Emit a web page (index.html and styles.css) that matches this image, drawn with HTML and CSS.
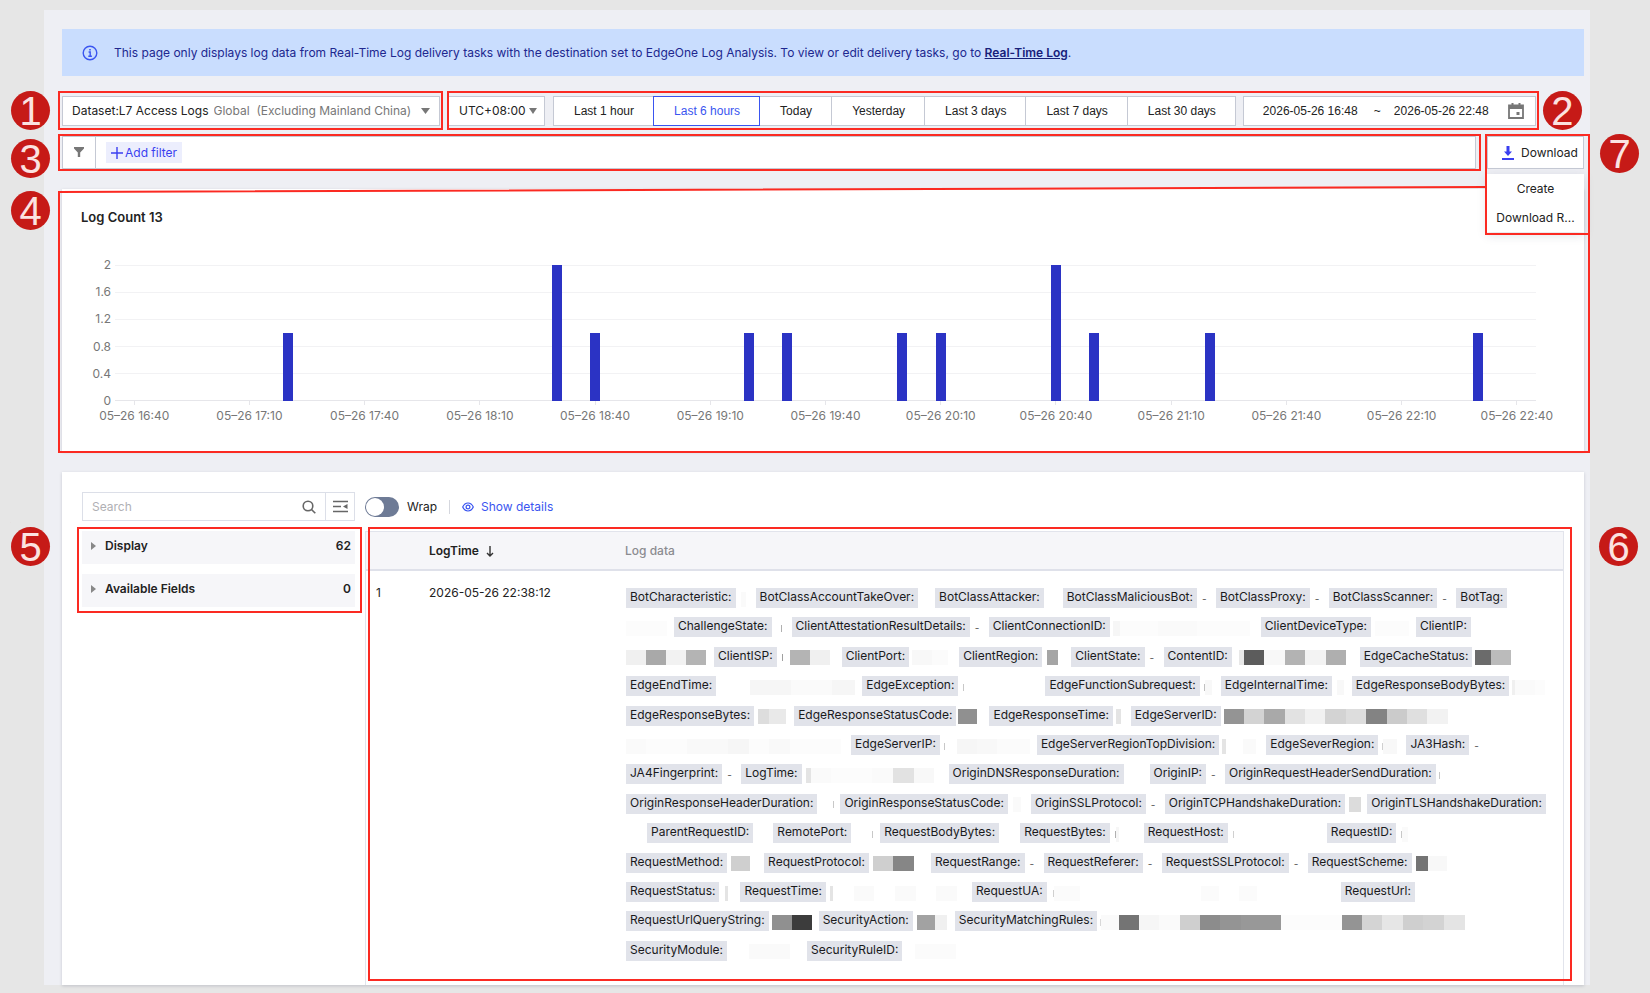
FILE: index.html
```html
<!DOCTYPE html>
<html lang="en">
  <head>
    <meta charset="UTF-8" />
    <meta name="viewport" content="width=device-width, initial-scale=1.0" />
    <title>Log Analysis</title>
    <link rel="stylesheet" href="styles.css">
  </head>
  <body>
    <main class="page">
      <!-- 1. notice -->
      <div class="notice">
        <svg class="notice-icon" width="16" height="16" viewBox="0 0 16 16" fill="none" stroke="#3a55f0" stroke-width="1.4">
          <circle cx="8" cy="8" r="6.8" />
          <path d="M6.6 7h1.6v4M6.3 11.2h3.6" />
          <path d="M8 4v1.5" stroke-width="1.6" />
        </svg>
        <p>This page only displays log data from Real-Time Log delivery tasks with the destination set to EdgeOne Log Analysis. To view or edit delivery tasks, go to <a href="#">Real-Time Log</a>.</p>
      </div>

      <!-- 2. toolbar -->
      <div class="toolbar">
        <div class="box dataset marked">
          <label for="dataset">Dataset:L7 Access Logs</label>
          <select id="dataset">
            <option>Global&nbsp; (Excluding Mainland China)</option>
          </select>
          <svg class="caret" width="9" height="6" viewBox="0 0 9 6"><path d="M0 0h9L4.500 6z" fill="#777" /></svg>
          <span class="mark mark-dataset"><b class="badge left">1</b></span>
        </div>
        <div class="time marked">
          <div class="box zone">
            <select aria-label="Time zone">
              <option>UTC+08:00</option>
            </select>
            <svg class="caret" width="8" height="6" viewBox="0 0 8 6"><path d="M0 0h8L4 6z" fill="#777" /></svg>
          </div>
          <div class="ranges">
            <button type="button">Last 1 hour</button>
            <button type="button" class="on">Last 6 hours</button>
            <button type="button">Today</button>
            <button type="button">Yesterday</button>
            <button type="button">Last 3 days</button>
            <button type="button">Last 7 days</button>
            <button type="button">Last 30 days</button>
          </div>
          <div class="box dates">
            <input type="text" aria-label="Start time" value="2026-05-26 16:48" />
            <span>~</span>
            <input type="text" aria-label="End time" value="2026-05-26 22:48" />
            <button type="button" class="plain" aria-label="Open calendar">
              <svg width="16" height="16" viewBox="0 0 16 16"><path d="M1 2.500h14V15H1z" fill="none" stroke="#777" stroke-width="1.800" /><path d="M1 2h14v4H1zM3.500 0h2v3h-2zM10.500 0h2v3h-2zM8.500 9h3v3h-3z" fill="#777" /></svg>
            </button>
          </div>
          <span class="mark mark-time"><b class="badge right">2</b></span>
        </div>
      </div>

      <!-- 3. filter and download -->
      <div class="filter-row">
        <div class="box filter marked">
          <span class="funnel">
            <svg width="10" height="11" viewBox="0 0 10 11"><path d="M0 0h10v1.500L6.200 5.500V10H3.800V5.500L0 1.500z" fill="#777" /></svg>
          </span>
          <button type="button" class="add">
            <svg width="12" height="12" viewBox="0 0 12 12"><path d="M6 0v12M0 6h12" stroke="#3a3ff0" stroke-width="1.400" /></svg>
            Add filter
          </button>
          <span class="mark mark-filter"><b class="badge left">3</b></span>
        </div>
        <div class="download marked">
          <button type="button" class="box">
            <svg width="12" height="14" viewBox="0 0 12 14"><path d="M4.500 0h3v5.500H10L6 10 2 5.500h2.500zM0 12h12v2H0z" fill="#3a3ff0" /></svg>
            Download
          </button>
          <div class="menu">
            <button type="button">Create</button>
            <button type="button">Download R...</button>
          </div>
          <span class="mark mark-download"><b class="badge right">7</b></span>
        </div>
      </div>

      <!-- 4. chart -->
      <section class="card chart marked">
        <h2>Log Count 13</h2>
        <div class="plot-row">
          <ul class="y-axis">
            <li>2</li>
            <li>1.6</li>
            <li>1.2</li>
            <li>0.8</li>
            <li>0.4</li>
            <li>0</li>
          </ul>
          <div class="plot">
            <div class="lines"><i></i><i></i><i></i><i></i><i></i><i></i></div>
            <div class="slots bars"></div>
          </div>
        </div>
        <div class="slots x-axis"></div>
        <!-- outline leaves out the corner taken by the download menu -->
        <svg class="outline" viewBox="0 0 1530 264" preserveAspectRatio="none">
          <path d="M1427 0L0 5V263H1530V46" fill="none" stroke="#fb2a22" stroke-width="2" vector-effect="non-scaling-stroke" />
        </svg>
        <b class="badge chart-badge">4</b>
      </section>

      <!-- 5. logs -->
      <section class="card logs">
        <aside class="side">
          <div class="search">
            <input type="text" aria-label="Search" placeholder="Search" />
            <svg class="lens" width="14" height="14" viewBox="0 0 14 14" fill="none" stroke="#666" stroke-width="1.600"><circle cx="6" cy="6" r="4.800" /><path d="M9.500 9.500L13.300 13.300" /></svg>
            <button type="button" class="plain" aria-label="Collapse fields">
              <svg width="15" height="13" viewBox="0 0 15 13"><path d="M0 1.500h15M0 6.500h8M0 11.500h15" stroke="#666" stroke-width="1.600" /><path d="M14.500 4v5L10 6.500z" fill="#666" /></svg>
            </button>
          </div>
          <div class="fields marked">
            <button type="button"><svg width="5" height="8" viewBox="0 0 5 8"><path d="M0 0l5 4-5 4z" fill="#888" /></svg><span>Display</span><span class="count">62</span></button>
            <button type="button"><svg width="5" height="8" viewBox="0 0 5 8"><path d="M0 0l5 4-5 4z" fill="#888" /></svg><span>Available Fields</span><span class="count">0</span></button>
            <span class="mark mark-fields"><b class="badge left">5</b></span>
          </div>
        </aside>
        <div class="result">
          <div class="options">
            <input type="checkbox" id="wrap" class="switch" />
            <label for="wrap">Wrap</label>
            <a href="#">
              <svg width="12" height="10" viewBox="0 0 12 10" fill="none" stroke="#3a55f0" stroke-width="1.200"><path d="M.7 5C2 2.200 4 1 6 1s4 1.200 5.300 4C10 7.800 8 9 6 9S2 7.800.7 5z" /><circle cx="6" cy="5" r="1.900" /></svg>
              Show details
            </a>
          </div>
          <div class="table-box marked">
            <table>
              <thead>
                <tr>
                  <th class="col-no"></th>
                  <th class="col-time">LogTime <svg width="8" height="11" viewBox="0 0 8 11"><path d="M4 0v10M1 7l3 3 3-3" fill="none" stroke="#333" stroke-width="1.400" /></svg></th>
                  <th class="col-data">Log data</th>
                </tr>
              </thead>
              <tbody>
                <tr>
                  <td>1</td>
                  <td>2026-05-26 22:38:12</td>
                  <td><div class="log-data"></div></td>
                </tr>
              </tbody>
            </table>
            <span class="mark mark-table"><b class="badge right">6</b></span>
          </div>
        </div>
      </section>
    </main>
    <script src="script.js"></script>
  </body>
</html>
```

FILE: styles.css
```css
/* reset */
html,
body,
h2,
p,
ul {
  margin: 0;
  padding: 0;
}
* {
  box-sizing: border-box;
}
ul {
  list-style: none;
}
body {
  padding: 10px 60px 8px 44px;
  background-color: #e6e6e6;
  color: #222;
  font: 12px/18px Inter, "Liberation Sans", sans-serif;
}
button,
input,
select {
  padding: 0;
  border: 0;
  background: none;
  color: inherit;
  font: inherit;
}
select {
  appearance: none;
}

/* common boxes */
.page {
  display: flex;
  flex-direction: column;
  min-height: calc(100vh - 18px);
  padding: 19px 6px 0 18px;
  background-color: #eeeff4;
}
.box {
  display: flex;
  align-items: center;
  border: 1px solid #c5c9d4;
  background-color: #fff;
}
.card {
  background-color: #fff;
  box-shadow: 0 1px 3px rgba(40, 50, 80, 0.2);
}
.marked {
  position: relative;
}

/* red frames and numbers */
.mark {
  position: absolute;
  z-index: 2;
  border: 2px solid #fb2a22;
  pointer-events: none;
}
.badge {
  position: absolute;
  width: 39px;
  height: 39px;
  border-radius: 50%;
  background-color: #c61a17;
  color: #fbe3e1;
  font: 40px/40px "Liberation Sans", sans-serif;
  text-align: center;
}
.badge.left {
  top: -2px;
  left: -49px;
}
.badge.right {
  top: -2px;
  right: -45px;
}
.mark-dataset {
  inset: -6px -4px -5px -5px;
}
.mark-time {
  inset: -5px -3px -4px -1px;
}
.mark-filter {
  inset: -3px -6px -3px -5px;
}
.mark-filter .badge {
  top: 3px;
}
.mark-download {
  top: -2px;
  right: -6px;
  left: -2px;
  height: 101px;
}
.mark-download .badge {
  right: -51px;
}
.mark-fields {
  inset: -4px -7px -6px -5px;
}
.mark-fields .badge.left {
  left: -68px;
}
.mark-table {
  inset: -5px -9px 4px 2px;
}
.mark-table .badge {
  right: -68px;
}

/************* 1. notice *************/
.notice {
  display: flex;
  align-items: center;
  gap: 16px;
  height: 47px;
  padding: 0 20px;
  background-color: #c9ddfe;
  color: #20278f;
}
.notice a {
  color: #17207a;
  font-weight: 600;
}

/************* 2. toolbar *************/
.toolbar {
  display: flex;
  gap: 8px;
  margin-top: 20px;
  height: 30px;
}
.dataset {
  width: 378px;
  padding: 0 9px;
  gap: 5px;
  white-space: nowrap;
}
.dataset select {
  flex: 1;
  min-width: 0;
  color: #777;
}
.time {
  display: flex;
  gap: 8px;
}
.zone {
  width: 97px;
  padding: 0 7px 0 10px;
}
.zone select {
  flex: 1;
  min-width: 0;
}
.ranges,
.dates {
  font-family: "Liberation Sans", sans-serif;
}
.ranges {
  display: flex;
}
.ranges button {
  padding: 0 19px 0 20px;
  margin-right: -1px;
  border: 1px solid #c5c9d4;
  background-color: #fff;
}
.ranges .on {
  z-index: 1;
  border-color: #3a55f0;
  color: #3a55f0;
}
.dates {
  width: 293px;
  padding: 0 11px 0 19px;
}
.dates input {
  width: 98px;
}
.dates span {
  width: 33px;
  text-align: center;
}
.plain {
  display: flex;
}
.dates .plain {
  margin-left: auto;
}

/************* 3. filter *************/
.filter-row {
  display: flex;
  gap: 11px;
  height: 33px;
  margin-top: 10px;
}
.filter {
  flex: 1;
  gap: 10px;
}
.funnel {
  display: flex;
  align-items: center;
  justify-content: center;
  align-self: stretch;
  width: 33px;
  border-right: 1px solid #c5c9d4;
}
.add {
  display: flex;
  align-items: center;
  gap: 2px;
  height: 21px;
  padding: 0 5px;
  background-color: #eceefd;
  color: #3a3ff0;
}
.download {
  width: 97px;
  z-index: 3;
}
.download .box {
  gap: 7px;
  width: 100%;
  height: 33px;
  padding-left: 14px;
}
.menu {
  position: absolute;
  top: 38px;
  right: 0;
  left: 0;
  background-color: #fff;
  box-shadow: 0 3px 10px rgba(40, 50, 80, 0.15);
}
.menu button {
  display: block;
  width: 100%;
  height: 29px;
}

/************* 4. chart *************/
.chart {
  margin-top: 20px;
  padding: 19px 48px 26px 19px;
  color: #777;
}
.chart h2 {
  color: #222;
  font-size: 13px;
  font-weight: 600;
}
.plot-row {
  display: flex;
  margin-top: 39px;
  height: 136px;
}
.y-axis {
  display: flex;
  flex-direction: column;
  justify-content: space-between;
  width: 34px;
  padding-right: 4px;
  margin: -9px 0;
  text-align: right;
}
.plot {
  display: grid;
  flex: 1;
}
.lines,
.bars {
  grid-area: 1 / 1;
}
.lines {
  display: flex;
  flex-direction: column;
  justify-content: space-between;
}
.lines i {
  height: 1px;
  background-color: #f2f2f4;
}
.lines i:last-child {
  background-color: #e6e6ea;
}
.slots {
  display: grid;
  grid-template-columns: repeat(37, minmax(0, 1fr));
}
.bars {
  align-items: end;
  justify-items: center;
}
.bars i {
  grid-row: 1;
  width: 10px;
  background-color: #2b33c4;
}
.x-axis {
  margin-left: 34px;
}
.x-axis span {
  display: flex;
  grid-row: 1;
  flex-direction: column;
  align-items: center;
  white-space: nowrap;
}
.x-axis span::before {
  content: "";
  width: 1px;
  height: 4px;
  margin-bottom: 2px;
  background-color: #e6e6ea;
}
.outline {
  position: absolute;
  top: -2px;
  left: -3px;
  width: calc(100% + 8px);
  height: calc(100% + 4px);
  overflow: visible;
}
.chart-badge {
  top: 2px;
  left: -51px;
}

/************* 5. logs *************/
.logs {
  display: flex;
  flex: 1;
  gap: 10px;
  margin-top: 21px;
  padding: 20px 20px 0 20px;
}
.side {
  width: 273px;
}
.search {
  display: flex;
  align-items: center;
  height: 29px;
  border: 1px solid #dcdfe8;
}
.search input {
  flex: 1;
  min-width: 0;
  padding-left: 9px;
}
.search input::placeholder {
  color: #b0b0b4;
}
.search .plain {
  align-items: center;
  align-self: stretch;
  justify-content: center;
  width: 29px;
  margin-left: 9px;
  border-left: 1px solid #dcdfe8;
}
.fields {
  display: flex;
  flex-direction: column;
  gap: 10px;
  margin-top: 10px;
}
.fields button {
  display: flex;
  align-items: center;
  gap: 9px;
  height: 33px;
  padding: 0 4px 4px 9px;
  background-color: #f6f6f9;
  font-weight: 600;
}
.count {
  margin-left: auto;
}
.result {
  display: flex;
  flex: 1;
  flex-direction: column;
}
.options {
  display: flex;
  align-items: center;
  height: 29px;
}
.switch {
  appearance: none;
  width: 34px;
  height: 20px;
  margin: 0 8px 0 0;
  padding: 1px;
  border-radius: 10px;
  background-color: #6e7b96;
}
.switch::before {
  content: "";
  display: block;
  width: 18px;
  height: 18px;
  border-radius: 50%;
  background-color: #fff;
}
.switch:checked::before {
  margin-left: 14px;
}
.options a {
  display: flex;
  align-items: center;
  gap: 7px;
  margin-left: 12px;
  padding-left: 12px;
  border-left: 1px solid #d5d7de;
  color: #3a55f0;
  line-height: 14px;
  text-decoration: none;
}
.table-box {
  flex: 1;
  margin-top: 10px;
  border: 1px solid #e2e4ec;
  border-bottom: 0;
}
table {
  width: 100%;
  border-collapse: collapse;
  text-align: left;
  table-layout: fixed;
}
th {
  height: 38px;
  padding: 0 10px;
  border-bottom: 2px solid #dfe1ea;
  background-color: #f6f6f9;
  font-weight: 600;
}
th svg {
  margin-left: 4px;
  vertical-align: -2px;
}
td {
  padding: 13px 10px 0;
  vertical-align: top;
}
.col-no {
  width: 53px;
}
.col-time {
  width: 196px;
}
.col-data {
  color: #8b8b90;
  font-weight: 500;
}
.log-data {
  display: flex;
  flex-direction: column;
  justify-content: space-between;
  min-height: 373px;
  margin: 4px 0 0 1px;
}
.log-row {
  display: flex;
  align-items: center;
}
.tag {
  padding: 0 4px 2px;
  background-color: #e1e3ea;
  color: #1a1a1c;
  white-space: nowrap;
}
.none {
  width: 19px;
  padding: 3px 0 0 5px;
  color: #555;
  font-size: 10px;
  line-height: 15px;
}
.px {
  height: 15px;
  margin-top: 2px;
}
.px.thin {
  height: 7px;
}
```

FILE: script.js
```
// ten-minute slots that hold logs: [slot, count]
const counts = [[4, 1], [11, 2], [12, 1], [16, 1], [17, 1], [20, 1], [21, 1], [24, 2], [25, 1], [28, 1], [35, 1]];
const bars = document.querySelector(".bars");
counts.forEach(([slot, n]) => {
  const bar = document.createElement("i");
  bar.style.gridColumn = slot + 1;
  bar.style.height = (n / 2) * 100 + "%";
  bars.append(bar);
});

// one time label every three slots
const axis = document.querySelector(".x-axis");
for (let slot = 0; slot < 37; slot += 3) {
  const min = 16 * 60 + 40 + slot * 10;
  const label = document.createElement("span");
  label.style.gridColumn = slot + 1;
  label.textContent = `05–26 ${Math.floor(min / 60)}:${String(min % 60).padStart(2, "0")}`;
  axis.append(label);
}

// log fields. "-" is an empty value, "20 b4" is a masked block (width, grey), "20" is blank
const rows = [
  "BotCharacteristic:|5,5 fa,10|BotClassAccountTakeOver:|17|BotClassAttacker:|19|BotClassMaliciousBot:|-|BotClassProxy:|-|BotClassScanner:|-|BotTag:",
  "41 fc,7|ChallengeState:|9,1 b0,10|ClientAttestationResultDetails:|-|ClientConnectionID:|3,7 f6,38 fc,39 fa,53 fc,11|ClientDeviceType:|4,34 fc,7|ClientIP:",
  "20 f0,20 a9,20 f2,20 b4,8|ClientISP:|5,1 a0,7,20 b4,20 f0,12|ClientPort:|3,20 f8,16 fb,11|ClientRegion:|5,11 a5,13|ClientState:|-|ContentID:|7,5 e8,20 5c,21 f8,20 b3,21 f3,20 af,14|EdgeCacheStatus:|3,16 6b,20 bb",
  "34,41 f6,41 fa,23 f6,7|EdgeException:|5,1 c8,81|EdgeFunctionSubrequest:|4,1 c0,7 f8,9|EdgeInternalTime:|5,7 f8,8|EdgeResponseBodyBytes:|3,3 f0,20 fa,10 fc",
  "4,11 dd,17 e9,8|EdgeResponseStatusCode:|2,19 90,12|EdgeResponseTime:|3,5 e4,10|EdgeServerID:|3,20 94,20 d3,21 a9,20 e2,20 f1,21 d3,20 dd,21 83,20 cb,20 df,21 f2",
  "20 fa,41 fc,41 f9,21 f6,20 fc,21 f9,51 fc,10|EdgeServerIP:|4,1 c8,12,20 f6,20 f8,33 fb,7|EdgeServerRegionTopDivision:|3,4 e4,17,13 fa,10|EdgeSeverRegion:|4,1 d0,14 f8,9|JA3Hash:|-",
  "-|LogTime:|4,5 e4,20 fa,41 fc,21 fa,21 e2,20 f8,15|OriginDNSResponseDuration:|26|OriginIP:|-|OriginRequestHeaderSendDuration:|3,1 c8",
  "16,1 c8,6|OriginResponseStatusCode:|5,8 fa,10|OriginSSLProtocol:|-|OriginTCPHandshakeDuration:|4,12 dc,6|OriginTLSHandshakeDuration:",
  "21|ParentRequestID:|20|RemotePort:|21,1 c8,7|RequestBodyBytes:|21|RequestBytes:|5,1 b0,3 f6,25|RequestHost:|5,1 d0,93|RequestID:|5,1 c8,6 fa",
  "4,19 cf,14|RequestProtocol:|4,20 cf,21 86,17|RequestRange:|-|RequestReferer:|-|RequestSSLProtocol:|-|RequestScheme:|4,12 74,19 f8",
  "6,3 e4,12|RequestTime:|4,3 e4,21,20 fa,21,21 fa,20,21 fa,15|RequestUA:|6,1 d0,26 fb,121,18 fb,20,18 fb,84|RequestUrl:",
  "3,20 90,20 3c,7|SecurityAction:|4,18 a2,12 f0,8|SecurityMatchingRules:|3,1 d8,18 fa,20 74,20 f6,21 fa,20 cf,20 8c,21 94,40 98,61 fc,20 94,20 d4,21 e6,20 cf,21 d3,21 e4",
  "22,41 fa,17|SecurityRuleID:|13,41 fb",
];
// rows that open with a field, not with the rest of a value
const first = { 3: "EdgeEndTime:", 4: "EdgeResponseBytes:", 6: "JA4Fingerprint:", 7: "OriginResponseHeaderDuration:", 9: "RequestMethod:", 10: "RequestStatus:", 11: "RequestUrlQueryString:", 12: "SecurityModule:" };

const add = (parent, cls, text = "") => {
  const el = document.createElement("span");
  el.className = cls;
  el.textContent = text;
  parent.append(el);
  return el;
};
const data = document.querySelector(".log-data");
rows.forEach((row, i) => {
  const line = document.createElement("div");
  line.className = "log-row";
  data.append(line);
  if (first[i]) add(line, "tag", first[i]);
  row.split("|").forEach((cell) => {
    if (cell.endsWith(":")) add(line, "tag", cell);
    else if (cell === "-") add(line, "none", "-");
    else
      cell.split(",").forEach((part) => {
        const [width, grey] = part.split(" ");
        const block = add(line, width === "1" ? "px thin" : "px");
        block.style.width = width + "px";
        if (grey) block.style.backgroundColor = "#" + grey.repeat(3);
      });
  });
});
```
